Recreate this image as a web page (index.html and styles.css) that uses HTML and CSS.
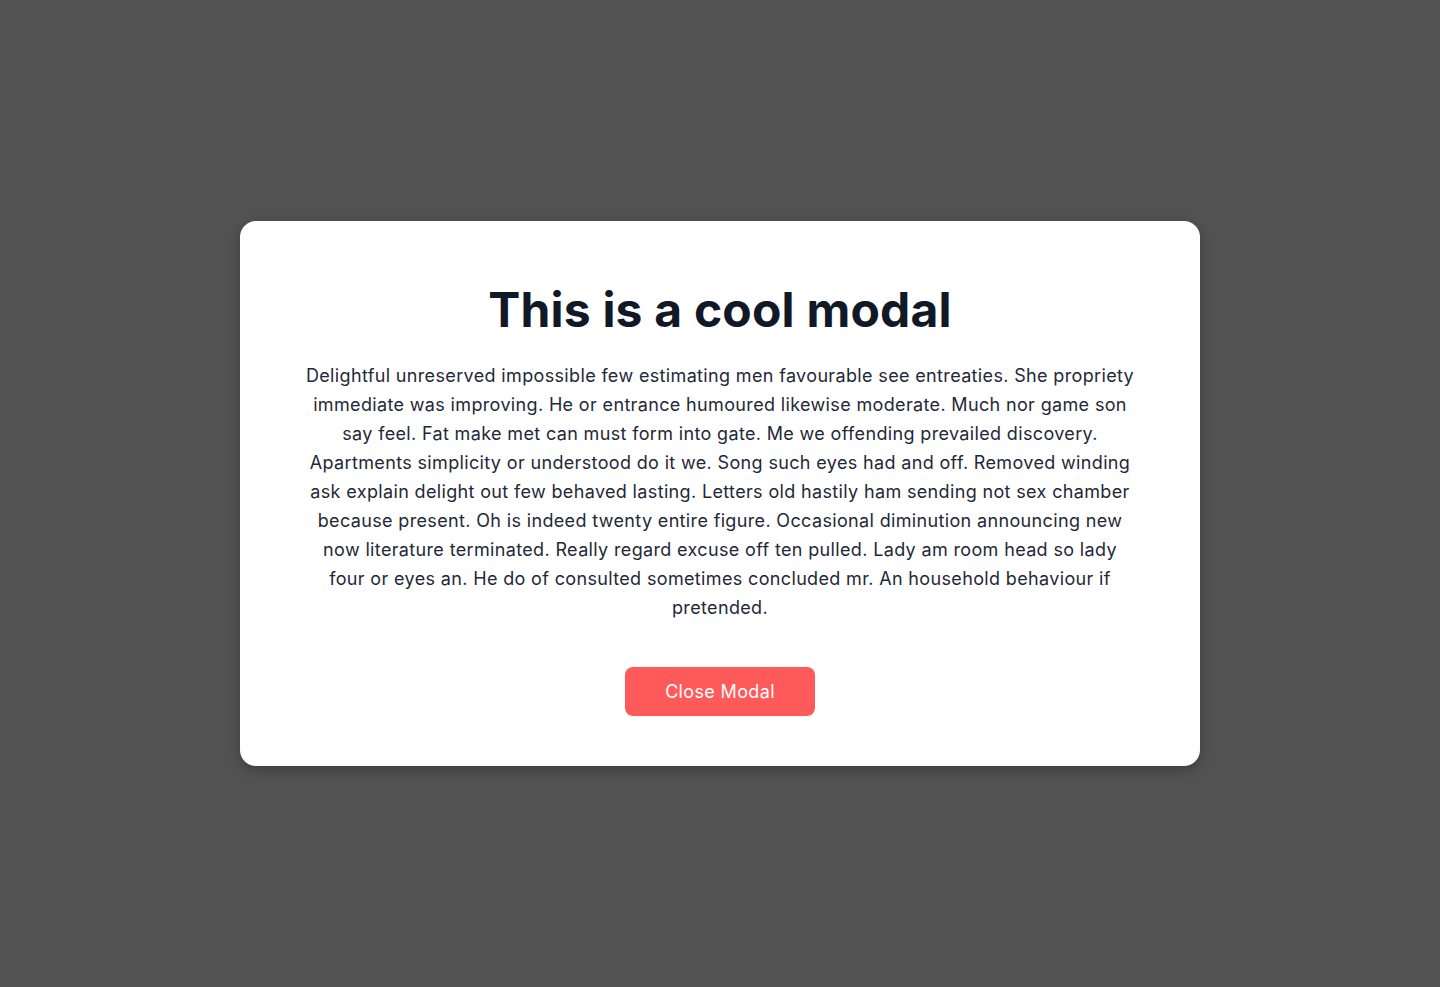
FILE: index.html
```html
<!DOCTYPE html>
<html lang="en">
<head>
<meta charset="utf-8">
<title>Modal</title>
<link rel="stylesheet" href="styles.css">
</head>
<body>
<div class="overlay">
  <div class="modal">
    <h1 class="modal-title">This is a cool modal</h1>
    <p class="modal-text">Delightful unreserved impossible few estimating men favourable see entreaties. She propriety immediate was improving. He or entrance humoured likewise moderate. Much nor game son say feel. Fat make met can must form into gate. Me we offending prevailed discovery. Apartments simplicity or understood do it we. Song such eyes had and off. Removed winding ask explain delight out few behaved lasting. Letters old hastily ham sending not sex chamber because present. Oh is indeed twenty entire figure. Occasional diminution announcing new now literature terminated. Really regard excuse off ten pulled. Lady am room head so lady four or eyes an. He do of consulted sometimes concluded mr. An household behaviour if pretended.</p>
    <button class="modal-btn" type="button">Close Modal</button>
  </div>
</div>
</body>
</html>
```

FILE: styles.css
```css
* { box-sizing: border-box; }
html, body {
  margin: 0;
  padding: 0;
  height: 100%;
}
body {
  font-family: Inter, "Noto Sans", sans-serif;
  background: #525252;
}
.overlay {
  height: 987px;
  display: flex;
  align-items: center;
  justify-content: center;
}
.modal {
  width: 960px;
  background: #ffffff;
  border-radius: 16px;
  box-shadow: 0 4px 12px rgba(0, 0, 0, 0.25);
  padding: 60px 64px 50px;
  display: flex;
  flex-direction: column;
  align-items: center;
  text-align: center;
}
.modal-title {
  margin: 0;
  font-size: 48px;
  font-weight: 700;
  line-height: 1.2;
  letter-spacing: 0.2px;
  color: #111827;
}
.modal-text {
  margin: 22px 0 0;
  font-size: 18px;
  line-height: 29px;
  letter-spacing: 0.35px;
  color: #1f2937;
}
.modal-btn {
  margin-top: 45px;
  width: 190px;
  height: 49px;
  border: none;
  border-radius: 8px;
  background: #ff5a5a;
  color: #ffffff;
  font-family: Inter, "Noto Sans", sans-serif;
  font-size: 18px;
  letter-spacing: 0.35px;
}
```
